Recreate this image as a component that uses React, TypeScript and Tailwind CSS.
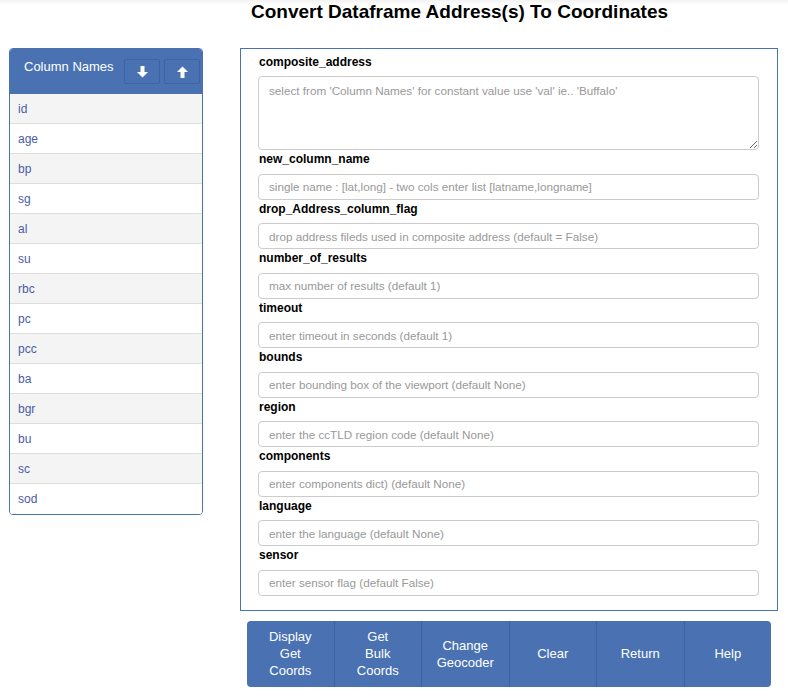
import React from "react";

const columns = ["id","age","bp","sg","al","su","rbc","pc","pcc","ba","bgr","bu","sc","sod"];

const fields: { label: string; placeholder: string }[] = [
  { label: "new_column_name", placeholder: "single name : [lat,long] - two cols enter list [latname,longname]" },
  { label: "drop_Address_column_flag", placeholder: "drop address fileds used in composite address (default = False)" },
  { label: "number_of_results", placeholder: "max number of results (default 1)" },
  { label: "timeout", placeholder: "enter timeout in seconds (default 1)" },
  { label: "bounds", placeholder: "enter bounding box of the viewport (default None)" },
  { label: "region", placeholder: "enter the ccTLD region code (default None)" },
  { label: "components", placeholder: "enter components dict) (default None)" },
  { label: "language", placeholder: "enter the language (default None)" },
  { label: "sensor", placeholder: "enter sensor flag (default False)" },
];

const buttons: string[][] = [
  ["Display", "Get", "Coords"],
  ["Get", "Bulk", "Coords"],
  ["Change", "Geocoder"],
  ["Clear"],
  ["Return"],
  ["Help"],
];

function ArrowDown() {
  return (
    <svg width="11" height="12" viewBox="0 0 11 12">
      <rect x="3.5" y="0" width="4" height="6.5" fill="white" />
      <polygon points="0,6 11,6 5.5,11.5" fill="white" />
    </svg>
  );
}
function ArrowUp() {
  return (
    <svg width="11" height="12" viewBox="0 0 11 12">
      <polygon points="0,6 11,6 5.5,0.5" fill="white" />
      <rect x="3.5" y="5.5" width="4" height="6.5" fill="white" />
    </svg>
  );
}

export default function App() {
  return (
    <div className="w-[788px] h-[696px] bg-white text-black" style={{ fontFamily: '"Liberation Sans", Arial, sans-serif' }}>
      <div className="h-[48px] bg-[linear-gradient(#f2f2f2,#ffffff_5px)]">
        <h1 className="pl-[131px] text-center text-[19px] leading-[24px] font-bold">
          Convert Dataframe Address(s) To Coordinates
        </h1>
      </div>
      <div className="flex">
        <div className="ml-[9px] w-[194px] self-start border border-[#4a72b2] rounded-[4px] overflow-hidden">
          <div className="h-[45px] bg-[#4a72b2] flex items-start pl-[14px]">
            <div className="text-white text-[13px] leading-[18px] pt-[9px] w-[100px]">Column Names</div>
            <div className="flex gap-[4px] mt-[10px]">
              <div className="w-[36px] h-[25px] border border-[#3f64a2] rounded-[2px] flex items-center justify-center"><ArrowDown /></div>
              <div className="w-[36px] h-[25px] border border-[#3f64a2] rounded-[2px] flex items-center justify-center"><ArrowUp /></div>
            </div>
          </div>
          {columns.map((c, i) => (
            <div
              key={c}
              className={`h-[30px] flex items-center pl-[8px] text-[12px] text-[#4a5ca8] ${i % 2 === 0 ? "bg-[#f4f4f4]" : "bg-white"} ${i < columns.length - 1 ? "border-b border-[#dddddd]" : ""}`}
            >
              {c}
            </div>
          ))}
        </div>
        <div className="ml-[37px] w-[538px] flex flex-col">
          <div className="border border-[#4a72b2] pt-[4px] pb-[14px] pl-[17px] pr-[18px]">
            <div className="text-[12px] leading-[18px] font-bold pl-[1px] mb-[5px]">composite_address</div>
            <textarea
              className="block w-[501px] h-[74px] border border-[#cccccc] rounded-[4px] px-[10px] py-[5px] text-[11.7px] placeholder:text-[#999999] outline-none"
              placeholder="select from 'Column Names' for constant value use 'val' ie.. 'Buffalo'"
            />
            {fields.map((f) => (
              <div key={f.label}>
                <div className="text-[12px] leading-[18px] font-bold pl-[1px] mb-[5.5px]">{f.label}</div>
                <input
                  className="block w-[501px] h-[26px] border border-[#cccccc] rounded-[4px] px-[10px] text-[11.7px] placeholder:text-[#999999] outline-none"
                  placeholder={f.placeholder}
                />
              </div>
            ))}
          </div>
          <div className="mt-[10px] ml-[7px] w-[524px] h-[66px] flex rounded-[4px] overflow-hidden bg-[#4a72b2]">
            {buttons.map((b, i) => (
              <div
                key={i}
                className={`flex-1 flex flex-col items-center justify-center text-white text-[13px] leading-[17px] ${i > 0 ? "border-l border-[#3d62a0]" : ""}`}
              >
                {b.map((l, j) => (
                  <span key={j}>{l}</span>
                ))}
              </div>
            ))}
          </div>
        </div>
      </div>
    </div>
  );
}
